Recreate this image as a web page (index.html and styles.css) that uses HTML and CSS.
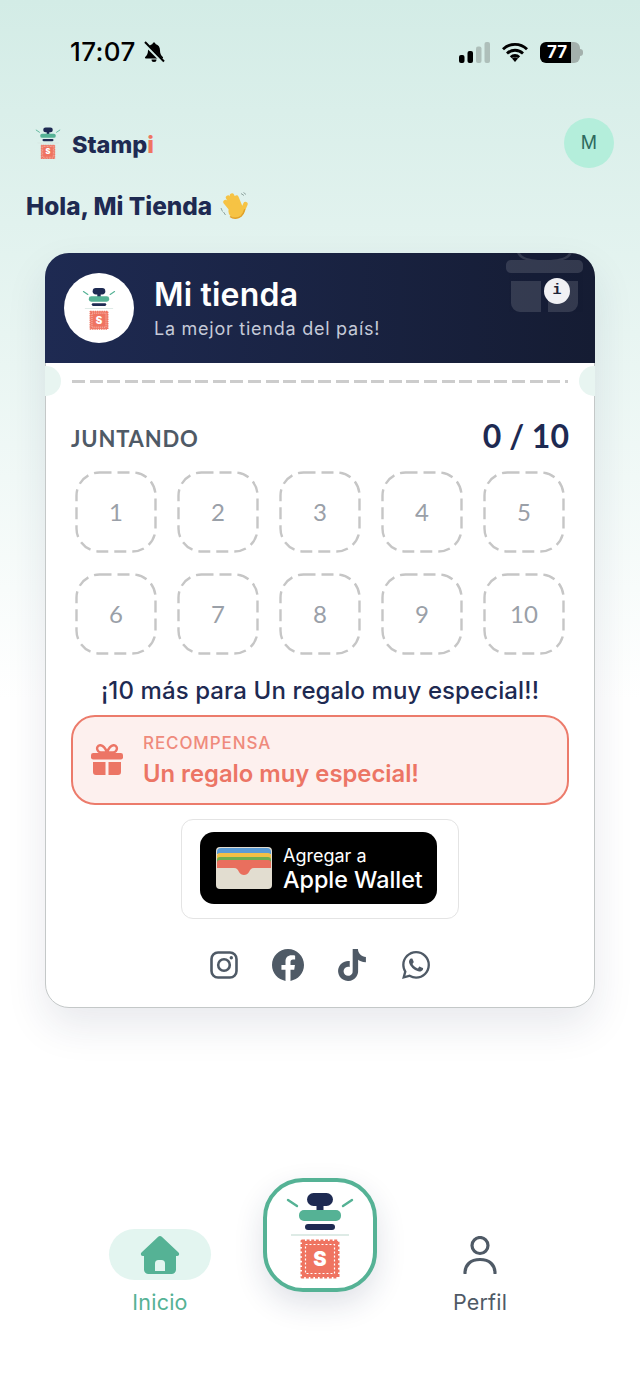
FILE: index.html
```html
<!DOCTYPE html>
<html lang="es">
<head>
<meta charset="utf-8">
<title>Stampi</title>
<link rel="stylesheet" href="styles.css">
</head>
<body>
<svg class="defs" width="0" height="0" aria-hidden="true">
  <symbol id="stamp" viewBox="0 0 70 92">
    <path d="M3 11l9 6M67 11l-9 6" stroke="#55b295" stroke-width="2.400" stroke-linecap="round" fill="none"/>
    <rect x="22" y="4" width="26" height="13" rx="6.500" fill="#1e2a52"/>
    <rect x="31.500" y="15" width="7" height="8" fill="#1e2a52"/>
    <rect x="14" y="21" width="42" height="11" rx="5" fill="#55b295"/>
    <rect x="20" y="35" width="30" height="6" rx="3" fill="#1e2a52"/>
    <path d="M6 46h58" stroke="#d3e4de" stroke-width="1.500"/>
    <rect x="17" y="52" width="36" height="36" fill="#ef7461" stroke="#ef7461" stroke-width="3" stroke-dasharray="3 1.600" stroke-linejoin="round"/>
    <rect x="20.500" y="55.500" width="29" height="29" fill="none" stroke="#fff" stroke-width="1.200" stroke-dasharray="2 2"/>
  </symbol>
  <symbol id="gift" viewBox="0 0 32 32">
    <path d="M16 8.500C14 3 11.500 1 9 1.200 6.500 1.400 5.500 4 6.500 6c.6 1.200 2 2.500 3.500 2.500zM16 8.500C18 3 20.500 1 23 1.200c2.500.2 3.500 2.800 2.500 4.800-.6 1.200-2 2.500-3.500 2.500z" fill="none" stroke="currentColor" stroke-width="2.400"/>
    <rect x="0" y="9" width="32" height="6.500" rx="2.200" fill="currentColor"/>
    <path d="M2 18h12.500v13H5a3 3 0 0 1-3-3zM17.500 18H30v10a3 3 0 0 1-3 3h-9.500z" fill="currentColor"/>
  </symbol>
  <symbol id="slot-dash" viewBox="0 0 82 82">
    <rect x="1.500" y="1.500" width="79" height="79" rx="23" fill="none" stroke="#c6c6c6" stroke-width="2.400" stroke-dasharray="12 6"/>
  </symbol>
</svg>

<header class="status">
  <div class="status-left">
    <span class="time">17:07</span>
    <svg class="bell" viewBox="0 0 22 22"><path d="M11 1.500c-.9 0-1.500.7-1.500 1.500C6.500 3.800 5 6.300 5 9.500c0 3-1 4.800-2.800 6.500-.5.500-.2 1.500.6 1.500h16.400c.8 0 1.100-1 .6-1.500C18 14.300 17 12.500 17 9.500 17 6.300 15.500 3.800 12.500 3c0-.8-.6-1.500-1.500-1.500zM8.500 18.500a2.500 2.500 0 0 0 5 0z" fill="#000"/><path d="M2 3l18 18" stroke="#d4ede7" stroke-width="3.500"/><path d="M2 1l19 19.500" stroke="#000" stroke-width="2"/></svg>
  </div>
  <div class="status-right">
    <svg class="signal" viewBox="0 0 31 21"><rect x="0" y="13" width="5.500" height="8" rx="2" fill="#000"/><rect x="8.500" y="9" width="5.500" height="12" rx="2" fill="#000"/><rect x="17" y="4.500" width="5.500" height="16.500" rx="2" fill="#aebfba"/><rect x="25.500" y="0" width="5.500" height="21" rx="2" fill="#aebfba"/></svg>
    <svg class="wifi" viewBox="0 0 26 20"><path d="M1 7.300a17 17 0 0 1 24 0M5 11.500a11.500 11.500 0 0 1 16 0M8.800 15.200a6 6 0 0 1 8.400 0" fill="none" stroke="#000" stroke-width="2.800"/><path d="M13 20l-3-3.400a4 4 0 0 1 6 0z" fill="#000"/></svg>
    <div class="battery">
      <span class="battery-level">77</span>
      <span class="battery-rest"></span>
      <span class="battery-nub"></span>
    </div>
  </div>
</header>

<section class="topbar">
  <div class="brand">
    <svg class="brand-mark" viewBox="0 0 70 92"><use href="#stamp"/><text class="stamp-s" x="35" y="77">S</text></svg>
    <span class="brand-name">Stamp<span class="brand-i">i</span></span>
  </div>
  <div class="avatar">M</div>
</section>

<h1 class="greeting">Hola, Mi Tienda
  <svg class="wave" viewBox="0 0 28 28">
    <path d="M21 1.500l3 2M23.500 .5l2.500 2M1 16l1.500 3.500M3.500 20l2 3" stroke="#8fa5a0" stroke-width="1" fill="none"/>
    <path d="M12 18L5.500 10M14 15L8 5.500M17 14L12 3.500M20 14L16.500 5.500M22 20l3.500-8" stroke="#f6c344" stroke-width="4.400" stroke-linecap="round" fill="none"/>
    <circle cx="16" cy="19" r="7.600" fill="#f6c344"/>
    <path d="M10 24.500c3 2.300 8 2.300 11-.2 1.800-1.600 3-4 3.800-7" stroke="#e0a02a" stroke-width="1.400" fill="none"/>
  </svg>
</h1>

<main class="card">
  <div class="card-head">
    <svg class="head-gift" viewBox="0 0 77 60"><path d="M14 0c2 4 8 6 18 7H22C17 7 13 4 11 0zM63 0c-2 4-8 6-18 7h10c5 0 9-3 11-7z" fill="#fff"/><rect x="0" y="7" width="77" height="13" rx="5" fill="#fff"/><path d="M5 28h30v31H14a9 9 0 0 1-9-9zM42 28h30v22a9 9 0 0 1-9 9H42z" fill="#fff"/></svg>
    <span class="info">i</span>
    <div class="shop-logo"><svg class="shop-mark" viewBox="0 0 70 92"><use href="#stamp"/><text class="stamp-s" x="35" y="77">S</text></svg></div>
    <div class="shop-text">
      <h2 class="shop-name">Mi tienda</h2>
      <p class="shop-sub">La mejor tienda del país!</p>
    </div>
  </div>

  <div class="ticket">
    <span class="notch notch-left"></span>
    <span class="dash"></span>
    <span class="notch notch-right"></span>
  </div>

  <div class="card-body">
    <div class="progress">
      <span class="progress-label">JUNTANDO</span>
      <span class="progress-count">0 / 10</span>
    </div>
    <div class="stamps">
      <div class="slot"><svg class="slot-line"><use href="#slot-dash"/></svg>1</div>
      <div class="slot"><svg class="slot-line"><use href="#slot-dash"/></svg>2</div>
      <div class="slot"><svg class="slot-line"><use href="#slot-dash"/></svg>3</div>
      <div class="slot"><svg class="slot-line"><use href="#slot-dash"/></svg>4</div>
      <div class="slot"><svg class="slot-line"><use href="#slot-dash"/></svg>5</div>
      <div class="slot"><svg class="slot-line"><use href="#slot-dash"/></svg>6</div>
      <div class="slot"><svg class="slot-line"><use href="#slot-dash"/></svg>7</div>
      <div class="slot"><svg class="slot-line"><use href="#slot-dash"/></svg>8</div>
      <div class="slot"><svg class="slot-line"><use href="#slot-dash"/></svg>9</div>
      <div class="slot"><svg class="slot-line"><use href="#slot-dash"/></svg>10</div>
    </div>
    <p class="message">¡10 más para Un regalo muy especial!!</p>
    <div class="reward">
      <svg class="reward-icon"><use href="#gift"/></svg>
      <div class="reward-text">
        <span class="reward-label">RECOMPENSA</span>
        <span class="reward-title">Un regalo muy especial!</span>
      </div>
    </div>
    <div class="wallet-frame">
      <div class="wallet-btn">
        <svg class="wallet-icon" viewBox="0 0 56 42">
          <rect width="56" height="42" rx="4" fill="#e2ddd0"/>
          <path d="M1 7V5a4 4 0 0 1 4-4h46a4 4 0 0 1 4 4v2z" fill="#5b9bd5"/>
          <path d="M1 12V9a3 3 0 0 1 3-3h48a3 3 0 0 1 3 3v3z" fill="#f3bf45"/>
          <path d="M1 17v-4a3 3 0 0 1 3-3h48a3 3 0 0 1 3 3v4z" fill="#6eae50"/>
          <path d="M1 21v-5a3 3 0 0 1 3-3h48a3 3 0 0 1 3 3v5H38c-3 0-4 2-5 4-1 2-3 3-5 3s-4-1-5-3c-1-2-2-4-5-4z" fill="#e96f5e"/>
        </svg>
        <div class="wallet-text">
          <span class="wallet-small">Agregar a</span>
          <span class="wallet-big">Apple Wallet</span>
        </div>
      </div>
    </div>
    <div class="socials">
      <svg class="social" viewBox="-2 -2 32 32"><rect x="1.500" y="1.500" width="25" height="25" rx="6.500" fill="none" stroke="currentColor" stroke-width="2.600"/><circle cx="14" cy="14" r="5.800" fill="none" stroke="currentColor" stroke-width="2.600"/><circle cx="21.300" cy="6.700" r="1.700" fill="currentColor"/></svg>
      <svg class="social" viewBox="0 0 24 24"><path fill="currentColor" d="M24 12.073c0-6.627-5.373-12-12-12s-12 5.373-12 12c0 5.990 4.388 10.954 10.125 11.854v-8.385H7.078v-3.470h3.047V9.430c0-3.007 1.792-4.669 4.533-4.669 1.312 0 2.686.235 2.686.235v2.953H15.830c-1.491 0-1.956.925-1.956 1.874v2.250h3.328l-.532 3.470h-2.796v8.385C19.612 23.027 24 18.062 24 12.073z"/></svg>
      <svg class="social" viewBox="0 0 24 24"><path fill="currentColor" d="M12.525.02c1.310-.02 2.610-.01 3.910-.02.08 1.530.63 3.090 1.750 4.170 1.120 1.110 2.700 1.620 4.240 1.790v4.030c-1.440-.05-2.890-.35-4.200-.97-.57-.26-1.100-.59-1.620-.93-.01 2.920.01 5.840-.02 8.750-.08 1.400-.54 2.790-1.350 3.940-1.310 1.920-3.580 3.170-5.910 3.210-1.430.08-2.860-.31-4.080-1.030-2.020-1.190-3.440-3.370-3.650-5.710-.02-.5-.03-1-.01-1.490.18-1.900 1.120-3.720 2.580-4.960 1.660-1.440 3.980-2.130 6.150-1.720.02 1.480-.04 2.960-.04 4.440-.99-.32-2.150-.23-3.020.37-.63.41-1.110 1.040-1.360 1.750-.21.51-.15 1.070-.14 1.610.24 1.640 1.820 3.020 3.500 2.870 1.120-.01 2.190-.66 2.770-1.610.19-.33.4-.67.41-1.060.1-1.790.06-3.570.07-5.360.01-4.030-.01-8.050.02-12.070z"/></svg>
      <svg class="social" viewBox="-1.700 -1.700 27.400 27.400"><path fill="currentColor" d="M17.472 14.382c-.297-.149-1.758-.867-2.030-.967-.273-.099-.471-.148-.67.150-.197.297-.767.966-.94 1.164-.173.199-.347.223-.644.075-.297-.150-1.255-.463-2.390-1.475-.883-.788-1.480-1.761-1.653-2.059-.173-.297-.018-.458.130-.606.134-.133.298-.347.446-.520.149-.174.198-.298.298-.497.099-.198.050-.371-.025-.520-.075-.149-.669-1.612-.916-2.207-.242-.579-.487-.5-.669-.510-.173-.008-.371-.010-.570-.010-.198 0-.520.074-.792.372-.272.297-1.040 1.016-1.040 2.479 0 1.462 1.065 2.875 1.213 3.074.149.198 2.096 3.200 5.077 4.487.709.306 1.262.489 1.694.625.712.227 1.360.195 1.871.118.571-.085 1.758-.719 2.006-1.413.248-.694.248-1.289.173-1.413-.074-.124-.272-.198-.570-.347m-5.421 7.403h-.004a9.870 9.870 0 01-5.031-1.378l-.361-.214-3.741.982.998-3.648-.235-.374a9.860 9.860 0 01-1.510-5.260c.001-5.450 4.436-9.884 9.888-9.884 2.640 0 5.122 1.030 6.988 2.898a9.825 9.825 0 012.893 6.994c-.003 5.450-4.437 9.884-9.885 9.884m8.413-18.297A11.815 11.815 0 0012.050 0C5.495 0 .16 5.335.157 11.892c0 2.096.547 4.142 1.588 5.945L.057 24l6.305-1.654a11.882 11.882 0 005.683 1.448h.005c6.554 0 11.890-5.335 11.893-11.893a11.821 11.821 0 00-3.480-8.413z"/></svg>
    </div>
  </div>
</main>

<nav class="nav">
  <div class="nav-item nav-active">
    <div class="nav-pill">
      <svg class="nav-icon" viewBox="0 0 40 38"><path d="M20 0c-.7 0-1.300.3-1.800.7L1.500 16.500C.2 17.800 1 20 2.800 20H4v13.500A4.500 4.500 0 0 0 8.500 38h23a4.500 4.500 0 0 0 4.500-4.500V20h1.200c1.800 0 2.600-2.200 1.300-3.500L21.800.7C21.300.3 20.700 0 20 0z" fill="#55b295"/><path d="M15 35V27.500a3.500 3.500 0 0 1 3.500-3.500h3a3.500 3.500 0 0 1 3.500 3.500V35z" fill="#e3f5f0"/></svg>
    </div>
    <span class="nav-label">Inicio</span>
  </div>
  <div class="nav-item">
    <div class="nav-stamp"><svg class="nav-mark" viewBox="0 0 70 92"><use href="#stamp"/><text class="stamp-s" x="35" y="77">S</text></svg></div>
  </div>
  <div class="nav-item">
    <div class="nav-pill nav-pill-plain">
      <svg class="nav-icon" viewBox="0 0 40 38"><circle cx="20" cy="9.500" r="8" fill="none" stroke="#4f5a66" stroke-width="3.200"/><path d="M5 37c0-8 5.500-13.500 15-13.500S35 29 35 37" fill="none" stroke="#4f5a66" stroke-width="3.200" stroke-linecap="round"/></svg>
    </div>
    <span class="nav-label nav-label-plain">Perfil</span>
  </div>
</nav>
</body>
</html>
```
FILE: styles.css
```css
* { box-sizing: border-box; }
html, body { margin: 0; padding: 0; }
body {
  width: 640px;
  height: 1391px;
  overflow: hidden;
  font-family: Inter, sans-serif;
  background: linear-gradient(#d3ece6 0, #ffffff 700px);
  color: #1e2a52;
}
.defs { position: absolute; }
.stamp-s { font: 900 20px Inter, sans-serif; fill: #fff; text-anchor: middle; }

.status {
  height: 104px;
  padding: 0 57px 0 70px;
  display: flex;
  align-items: center;
  justify-content: space-between;
}
.status-left { display: flex; align-items: center; gap: 7px; }
.time { font: 500 26px/30px Inter, sans-serif; color: #000; letter-spacing: .4px; }
.bell { width: 22px; height: 22px; }
.status-right { display: flex; align-items: center; gap: 12px; }
.signal { width: 31px; height: 21px; }
.wifi { width: 26px; height: 20px; }
.battery { display: flex; align-items: center; width: 43px; height: 21px; }
.battery-level {
  width: 31px;
  height: 21px;
  background: #000;
  border-radius: 6px 0 0 6px;
  color: #fff;
  font: 700 17px/21px Inter, sans-serif;
  text-align: center;
  padding-left: 3px;
}
.battery-rest { width: 9px; height: 21px; background: #a3b0ac; border-radius: 0 6px 6px 0; }
.battery-nub { width: 3px; height: 7px; background: #a3b0ac; border-radius: 0 3px 3px 0; }

.topbar {
  margin-top: 14px;
  padding: 0 26px 0 35px;
  height: 50px;
  display: flex;
  align-items: center;
  justify-content: space-between;
}
.brand { display: flex; align-items: center; gap: 11px; }
.brand-mark { width: 26px; height: 34px; }
.brand-name { padding-top: 3px; font: 800 23.500px/30px Inter, sans-serif; color: #1e2a52; }
.brand-i { color: #ef7461; }
.avatar {
  width: 50px;
  height: 50px;
  border-radius: 50%;
  background: #b4eedb;
  color: #2e6a5e;
  font: 400 18px/50px Inter, sans-serif;
  text-align: center;
}
.greeting {
  margin: 23px 0 0;
  padding-left: 26px;
  height: 30px;
  display: flex;
  align-items: center;
  gap: 8px;
  font: 800 24.400px/30px Inter, sans-serif;
  color: #1e2a52;
}
.wave { width: 28px; height: 28px; }

.card {
  margin: 32px 0 0 45px;
  width: 550px;
  height: 755px;
  background: #fff;
  border: 1px solid #c4c8c8;
  border-radius: 24px;
  box-shadow: 0 18px 40px rgba(30, 42, 82, .1);
}
.card-head {
  position: relative;
  overflow: hidden;
  margin: -1px -1px 0;
  height: 110px;
  padding: 20px 19px;
  display: flex;
  align-items: center;
  gap: 20px;
  background: linear-gradient(90deg, #1e2a52, #151c33);
  border-radius: 24px 24px 0 0;
}
.head-gift { position: absolute; left: 461px; top: 0; width: 77px; height: 60px; opacity: .13; }
.info {
  position: absolute;
  left: 499px;
  top: 25px;
  width: 26px;
  height: 26px;
  border-radius: 50%;
  background: #f1f1f4;
  color: #1e2438;
  font: 700 15px/26px "Liberation Mono", monospace;
  text-align: center;
}
.shop-logo {
  flex: none;
  width: 70px;
  height: 70px;
  border-radius: 50%;
  background: #fff;
  display: flex;
  align-items: center;
  justify-content: center;
}
.shop-mark { width: 34px; height: 45px; }
.shop-name { margin: 0; font: 600 32px/40px Inter, sans-serif; color: #fff; letter-spacing: .2px; }
.shop-sub { margin: 2px 0 0; font: 400 18px/24px Inter, sans-serif; color: #c5cad8; letter-spacing: .75px; }

.ticket {
  position: relative;
  height: 36px;
  padding: 0 26px;
  display: flex;
  align-items: center;
}
.dash {
  flex: 1;
  height: 3px;
  background: repeating-linear-gradient(90deg, #cccccc 0 13px, transparent 13px 17.6px);
}
.notch { position: absolute; top: 3px; width: 16px; height: 30px; background: #e8f5f1; }
.notch-left { left: -1px; border-radius: 0 15px 15px 0; }
.notch-right { right: -1px; border-radius: 15px 0 0 15px; }

.card-body { padding: 0 25px; }
.progress {
  margin-top: 17px;
  height: 40px;
  display: flex;
  align-items: center;
  justify-content: space-between;
}
.progress-label { padding-top: 6px; font: 700 22px/40px Lato, sans-serif; color: #4f5a66; letter-spacing: .8px; }
.progress-count { font: 700 32px/40px Lato, sans-serif; color: #1e2a52; }
.stamps {
  margin-top: 15px;
  padding: 0 4px;
  display: grid;
  grid-template-columns: repeat(5, 82px);
  grid-auto-rows: 82px;
  gap: 20px;
}
.slot {
  position: relative;
  display: flex;
  align-items: center;
  justify-content: center;
  font: 400 24px/30px Lato, sans-serif;
  color: #9aa0a8;
}
.slot-line { position: absolute; left: 0; top: 0; width: 82px; height: 82px; }
.message {
  margin: 21px 0 0;
  font: 500 24px/30px Inter, sans-serif;
  letter-spacing: .1px;
  color: #1e2a52;
  text-align: center;
  white-space: nowrap;
}
.reward {
  margin-top: 9px;
  height: 90px;
  padding: 0 18px;
  display: flex;
  align-items: center;
  gap: 20px;
  background: #fdf0ee;
  border: 2px solid #ec7b6b;
  border-radius: 24px;
}
.reward-icon { width: 32px; height: 32px; color: #ec7565; }
.reward-text { display: flex; flex-direction: column; margin-top: -1px; }
.reward-label { font: 500 17px/29px Inter, sans-serif; color: #ef8a7c; letter-spacing: .9px; }
.reward-title { font: 600 23.800px/32px Inter, sans-serif; color: #ec7565; }

.wallet-frame {
  margin: 14px auto 0;
  width: 278px;
  height: 100px;
  border: 1.500px solid #e4e4e4;
  border-radius: 12px;
  padding: 12px 0 0 18px;
}
.wallet-btn {
  width: 237px;
  height: 72px;
  background: #000;
  border-radius: 14px;
  padding: 15px 0 0 16px;
  display: flex;
  gap: 11px;
}
.wallet-icon { width: 56px; height: 42px; }
.wallet-text { display: flex; flex-direction: column; color: #fff; font-family: Inter, sans-serif; margin-top: -3px; }
.wallet-small { font-size: 18px; line-height: 23px; }
.wallet-big { font-size: 23.300px; line-height: 25px; font-weight: 500; white-space: nowrap; }

.socials {
  margin-top: 30px;
  display: flex;
  justify-content: center;
  gap: 32px;
}
.social { width: 32px; height: 32px; color: #4f5a66; }

.nav {
  margin: 170px 80px 0;
  display: grid;
  grid-template-columns: repeat(3, 160px);
}
.nav-item {
  display: flex;
  flex-direction: column;
  align-items: center;
}
.nav-pill {
  margin-top: 51px;
  width: 102px;
  height: 51px;
  border-radius: 26px;
  background: #e3f5f0;
  display: flex;
  align-items: center;
  justify-content: center;
}
.nav-pill-plain { background: transparent; }
.nav-icon { width: 40px; height: 38px; }
.nav-label { margin-top: 9px; font: 400 21.500px/26px Inter, sans-serif; letter-spacing: .2px; color: #55b295; }
.nav-label-plain { color: #4f5a66; }
.nav-stamp {
  width: 114px;
  height: 114px;
  border: 4px solid #55b295;
  border-radius: 40px;
  background: #fff;
  box-shadow: 0 12px 30px rgba(30, 42, 82, .14);
  display: flex;
  align-items: center;
  justify-content: center;
}
.nav-mark { width: 70px; height: 92px; }
```
